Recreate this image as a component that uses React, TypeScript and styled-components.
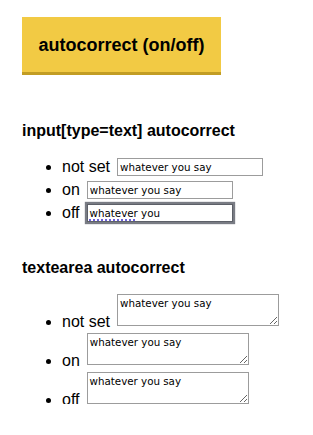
import React from 'react';
import styled, { createGlobalStyle, css } from 'styled-components';

const GlobalStyle = createGlobalStyle`
  html, body {
    margin: 0;
    padding: 0;
    background: #fff;
  }
  body {
    font-family: 'Liberation Sans', Arial, Helvetica, sans-serif;
    color: #000;
  }
`;

const Page = styled.main`
  padding: 17px 0 0 22px;
`;

const ToggleButton = styled.button`
  display: block;
  width: 199px;
  height: 58px;
  margin: 0;
  padding: 0;
  border: 0;
  border-bottom: 3px solid #c29d24;
  background: #f2ca44;
  color: #000;
  font-family: 'Liberation Sans', Arial, sans-serif;
  font-size: 18px;
  font-weight: bold;
  line-height: 56px;
  text-align: center;
  cursor: pointer;
`;

const Heading = styled.h3<{ $top: number }>`
  margin: ${(p) => p.$top}px 0 0;
  font-size: 16px;
  font-weight: bold;
  line-height: 18px;
`;

const List = styled.ul<{ $top: number; $gap: number }>`
  list-style: none;
  margin: ${(p) => p.$top}px 0 0;
  padding: 0 0 0 24px;
  display: flex;
  flex-direction: column;
  gap: ${(p) => p.$gap}px;
`;

const Item = styled.li<{ $multi?: boolean }>`
  display: flex;
  align-items: ${(p) => (p.$multi ? 'flex-end' : 'center')};
  height: ${(p) => (p.$multi ? 32 : 22)}px;
`;

const Lead = styled.span<{ $multi?: boolean }>`
  display: flex;
  align-items: center;
  line-height: 18px;
  font-size: 16px;
  margin-right: 7px;
  ${(p) =>
    p.$multi &&
    css`
      margin-bottom: -5px;
    `}
`;

const Dot = styled.span`
  width: 5px;
  height: 5px;
  border-radius: 50%;
  background: #000;
  margin: 1px 11px 0 0;
`;

const fieldText = css`
  box-sizing: border-box;
  margin: 0;
  font-family: 'DejaVu Sans', Verdana, sans-serif;
  font-size: 10.3px;
  color: #000;
  background: #fff;
  border: 1px solid #9c9c9c;
  border-radius: 0;
  outline: none;
`;

const TextField = styled.input`
  ${fieldText}
  width: 146px;
  height: 18px;
  padding: 0 2px;
`;

const FocusedField = styled.div`
  ${fieldText}
  width: 146px;
  height: 18px;
  padding: 0 2px;
  line-height: 16px;
  border-color: #5d6068;
  box-shadow: 0 0 1px 2px rgba(98, 101, 110, 0.85);
  white-space: nowrap;
`;

const Misspelled = styled.span`
  text-decoration: underline dotted #6a5fd8;
  text-decoration-thickness: 2px;
  text-underline-offset: 2px;
`;

const TextBox = styled.textarea`
  ${fieldText}
  width: 162px;
  height: 32px;
  padding: 2px 2px;
  line-height: 12px;
  resize: both;
`;

const SAMPLE = 'whatever you say';

const inputRows = [
  { label: 'not set', props: {} },
  { label: 'on', props: { autoCorrect: 'on' } },
];

const areaRows = [
  { label: 'not set', props: {} },
  { label: 'on', props: { autoCorrect: 'on' } },
  { label: 'off', props: { autoCorrect: 'off' } },
];

export default function App() {
  return (
    <Page>
      <GlobalStyle />
      <ToggleButton>autocorrect (on/off)</ToggleButton>

      <Heading $top={47}>input[type=text] autocorrect</Heading>
      <List $top={16} $gap={1}>
        {inputRows.map((row) => (
          <Item key={row.label}>
            <Lead>
              <Dot />
              {row.label}
            </Lead>
            <TextField type="text" defaultValue={SAMPLE} {...row.props} />
          </Item>
        ))}
        <Item>
          <Lead>
            <Dot />
            off
          </Lead>
          <FocusedField>
            <Misspelled>whatever</Misspelled> you
          </FocusedField>
        </Item>
      </List>

      <Heading $top={35}>textearea autocorrect</Heading>
      <List $top={17} $gap={7}>
        {areaRows.map((row) => (
          <Item key={row.label} $multi>
            <Lead $multi>
              <Dot />
              {row.label}
            </Lead>
            <TextBox defaultValue={SAMPLE} {...row.props} />
          </Item>
        ))}
      </List>
    </Page>
  );
}
